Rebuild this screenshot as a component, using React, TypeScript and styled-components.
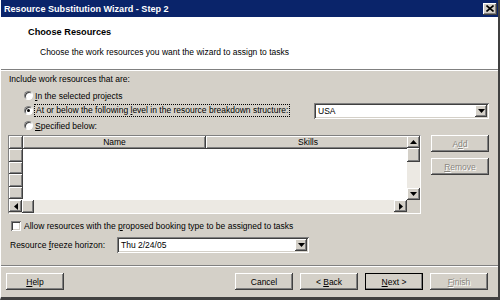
import styled, { createGlobalStyle } from 'styled-components';

const GlobalStyle = createGlobalStyle`
  body {
    margin: 0;
    background: #d4d0c8;
  }
  * {
    box-sizing: border-box;
  }
`;

const raised = `
  box-shadow: inset -1px -1px #404040, inset 1px 1px #ffffff, inset -2px -2px #808080, inset 2px 2px #d4d0c8;
`;

const sunken = `
  box-shadow: inset 1px 1px #808080, inset -1px -1px #ffffff, inset 2px 2px #404040, inset -2px -2px #d4d0c8;
`;

function CloseIcon() {
  return (
    <svg width="8" height="7" viewBox="0 0 8 7">
      <path d="M0.5 0.5 L7.5 6.5 M7.5 0.5 L0.5 6.5" stroke="#000" strokeWidth="1.6" />
    </svg>
  );
}

function Arrow({ dir }: { dir: 'up' | 'down' | 'left' | 'right' }) {
  const pts = {
    down: '0,0 7,0 3.5,4',
    up: '0,4 7,4 3.5,0',
    left: '4,0 4,7 0,3.5',
    right: '0,0 0,7 4,3.5',
  }[dir];
  const vertical = dir === 'up' || dir === 'down';
  return (
    <svg width={vertical ? 7 : 4} height={vertical ? 4 : 7} viewBox={vertical ? '0 0 7 4' : '0 0 4 7'}>
      <polygon points={pts} fill="#000" />
    </svg>
  );
}

function App() {
  return (
    <>
      <GlobalStyle />
      <Window>
        <TitleBar>
          <span>Resource Substitution Wizard - Step 2</span>
          <CloseButton>
            <CloseIcon />
          </CloseButton>
        </TitleBar>
        <Header>
          <HeaderTitle>Choose Resources</HeaderTitle>
          <HeaderText>Choose the work resources you want the wizard to assign to tasks</HeaderText>
        </Header>
        <Body>
          <Label>Include work resources that are:</Label>
          <RadioGroup>
            <RadioRow>
              <Radio />
              <span>
                <u>I</u>n the selected projects
              </span>
            </RadioRow>
            <RadioRow>
              <Radio $checked />
              <Focused>
                At or below the following <u>l</u>evel in the resource breakdown structure:
              </Focused>
              <Combo $width={175}>
                <span>USA</span>
                <DropButton>
                  <Arrow dir="down" />
                </DropButton>
              </Combo>
            </RadioRow>
            <RadioRow>
              <Radio />
              <span>
                <u>S</u>pecified below:
              </span>
            </RadioRow>
          </RadioGroup>

          <TableArea>
            <Grid>
              <GridBody>
                <HeaderRow>
                  <RowHead />
                  <ColHead $width={183}>Name</ColHead>
                  <ColHead $width={204}>Skills</ColHead>
                </HeaderRow>
                {[0, 1, 2, 3].map((i) => (
                  <DataRow key={i}>
                    <RowHead />
                    <Cell />
                  </DataRow>
                ))}
              </GridBody>
              <VScroll>
                <ScrollBtn>
                  <Arrow dir="up" />
                </ScrollBtn>
                <VThumb />
                <Track />
                <ScrollBtn>
                  <Arrow dir="down" />
                </ScrollBtn>
              </VScroll>
              <HScroll>
                <ScrollBtn>
                  <Arrow dir="left" />
                </ScrollBtn>
                <HThumb />
                <Track />
                <ScrollBtn>
                  <Arrow dir="right" />
                </ScrollBtn>
              </HScroll>
              <Corner />
            </Grid>
            <SideButtons>
              <Button $disabled>
                A<u>d</u>d
              </Button>
              <Button $disabled>
                <u>R</u>emove
              </Button>
            </SideButtons>
          </TableArea>

          <CheckRow>
            <Checkbox />
            <span>
              Allow resources with the <u>p</u>roposed booking type to be assigned to tasks
            </span>
          </CheckRow>
          <FieldRow>
            <span>
              Resource <u>f</u>reeze horizon:
            </span>
            <Combo $width={192}>
              <span>Thu 2/24/05</span>
              <DropButton>
                <Arrow dir="down" />
              </DropButton>
            </Combo>
          </FieldRow>
        </Body>
        <Footer>
          <Button>
            <u>H</u>elp
          </Button>
          <Spacer />
          <Button>Cancel</Button>
          <Button>
            {'< '}
            <u>B</u>ack
          </Button>
          <Button $default>
            <u>N</u>ext{' >'}
          </Button>
          <Button $disabled>
            <u>F</u>inish
          </Button>
        </Footer>
      </Window>
    </>
  );
}

const Window = styled.div`
  width: 500px;
  height: 300px;
  display: flex;
  flex-direction: column;
  background: #d4d0c8;
  font-family: 'Liberation Sans', Arial, sans-serif;
  font-size: 8.5px;
  color: #000;
  border-left: 1px solid #ffffff;
  border-right: 2px solid #404040;
  border-bottom: 3px solid #404040;
  overflow: hidden;
`;

const TitleBar = styled.div`
  height: 17px;
  flex-shrink: 0;
  display: flex;
  align-items: center;
  justify-content: space-between;
  padding: 0 1px 0 3px;
  background: #0a246a;
  color: #ffffff;
  font-weight: bold;
  font-size: 9.1px;
`;

const CloseButton = styled.div`
  width: 14px;
  height: 12px;
  display: flex;
  align-items: center;
  justify-content: center;
  background: #d4d0c8;
  ${raised}
`;

const Header = styled.div`
  height: 53px;
  flex-shrink: 0;
  background: #ffffff;
  border-bottom: 1px solid #808080;
  box-shadow: 0 1px #ffffff;
  padding: 9px 0 0 27px;
`;

const HeaderTitle = styled.div`
  font-weight: bold;
  font-size: 9.2px;
  line-height: 12px;
`;

const HeaderText = styled.div`
  margin: 8px 0 0 12px;
  line-height: 12px;
`;

const Body = styled.div`
  padding: 3px 9px 0 7px;
`;

const Label = styled.div`
  line-height: 12px;
  padding-left: 1px;
`;

const RadioGroup = styled.div`
  margin-top: 3px;
  padding-left: 16px;
`;

const RadioRow = styled.div`
  height: 15px;
  display: flex;
  align-items: center;
  gap: 2px;
`;

const Radio = styled.span<{ $checked?: boolean }>`
  width: 9px;
  height: 9px;
  border-radius: 50%;
  background: #ffffff;
  border: 1px solid #808080;
  border-right-color: #ffffff;
  border-bottom-color: #ffffff;
  box-shadow: inset 1px 1px #404040;
  display: inline-flex;
  align-items: center;
  justify-content: center;
  flex-shrink: 0;
  &::after {
    content: '';
    width: 3px;
    height: 3px;
    border-radius: 50%;
    background: ${(p) => (p.$checked ? '#000' : 'transparent')};
  }
`;

const Focused = styled.span`
  outline: 1px dotted #000;
  padding: 0 1px;
  line-height: 11px;
`;

const Combo = styled.div<{ $width: number }>`
  width: ${(p) => p.$width}px;
  height: 16px;
  margin-left: auto;
  display: flex;
  align-items: center;
  justify-content: space-between;
  padding: 2px 2px 2px 4px;
  background: #ffffff;
  ${sunken}
`;

const DropButton = styled.div`
  width: 12px;
  height: 12px;
  display: flex;
  align-items: center;
  justify-content: center;
  background: #d4d0c8;
  ${raised}
`;

const TableArea = styled.div`
  margin-top: 2px;
  display: flex;
  align-items: flex-start;
`;

const Grid = styled.div`
  width: 415px;
  height: 79px;
  display: grid;
  grid-template-columns: 1fr 13px;
  grid-template-rows: 1fr 13px;
  border: 1px solid #808080;
  border-right-color: #ffffff;
  border-bottom-color: #ffffff;
`;

const GridBody = styled.div`
  background: #ffffff;
  overflow: hidden;
`;

const HeaderRow = styled.div`
  display: flex;
  height: 13px;
`;

const RowHead = styled.div`
  width: 14px;
  flex-shrink: 0;
  background: #d4d0c8;
  ${raised}
`;

const ColHead = styled.div<{ $width: number }>`
  width: ${(p) => p.$width}px;
  flex-shrink: 0;
  background: #d4d0c8;
  text-align: center;
  line-height: 13px;
  ${raised}
`;

const DataRow = styled.div`
  display: flex;
  height: 12.5px;
`;

const Cell = styled.div`
  flex: 1;
  background: #ffffff;
`;

const VScroll = styled.div`
  display: flex;
  flex-direction: column;
`;

const HScroll = styled.div`
  display: flex;
`;

const ScrollBtn = styled.div`
  width: 13px;
  height: 12px;
  flex-shrink: 0;
  display: flex;
  align-items: center;
  justify-content: center;
  background: #d4d0c8;
  ${raised}
`;

const Track = styled.div`
  flex: 1;
  background: #ece9e3;
`;

const VThumb = styled.div`
  height: 14px;
  flex-shrink: 0;
  background: #d4d0c8;
  ${raised}
`;

const HThumb = styled.div`
  width: 12px;
  flex-shrink: 0;
  background: #d4d0c8;
  ${raised}
`;

const Corner = styled.div`
  background: #d4d0c8;
`;

const SideButtons = styled.div`
  margin-left: 10px;
  display: flex;
  flex-direction: column;
  gap: 6px;
`;

const Button = styled.div<{ $disabled?: boolean; $default?: boolean }>`
  width: 58px;
  height: 17px;
  flex-shrink: 0;
  display: flex;
  align-items: center;
  justify-content: center;
  white-space: pre;
  background: #d4d0c8;
  color: ${(p) => (p.$disabled ? '#8a8780' : '#000')};
  text-shadow: ${(p) => (p.$disabled ? '1px 1px #ffffff' : 'none')};
  outline: ${(p) => (p.$default ? '1px solid #000' : 'none')};
  outline-offset: -1px;
  ${raised}
`;

const CheckRow = styled.div`
  margin-top: 6px;
  display: flex;
  align-items: center;
  gap: 3px;
  padding-left: 3px;
  height: 12px;
`;

const Checkbox = styled.span`
  width: 10px;
  height: 10px;
  background: #ffffff;
  ${sunken}
`;

const FieldRow = styled.div`
  margin-top: 5px;
  display: flex;
  align-items: center;
  padding-left: 2px;
  width: 301px;
`;

const Footer = styled.div`
  margin-top: auto;
  height: 32px;
  flex-shrink: 0;
  display: flex;
  align-items: flex-start;
  gap: 7px;
  padding: 7px 10px 0 5px;
  border-top: 1px solid #808080;
  box-shadow: inset 0 1px #ffffff;
`;

const Spacer = styled.div`
  flex: 1;
`;

export default App;
